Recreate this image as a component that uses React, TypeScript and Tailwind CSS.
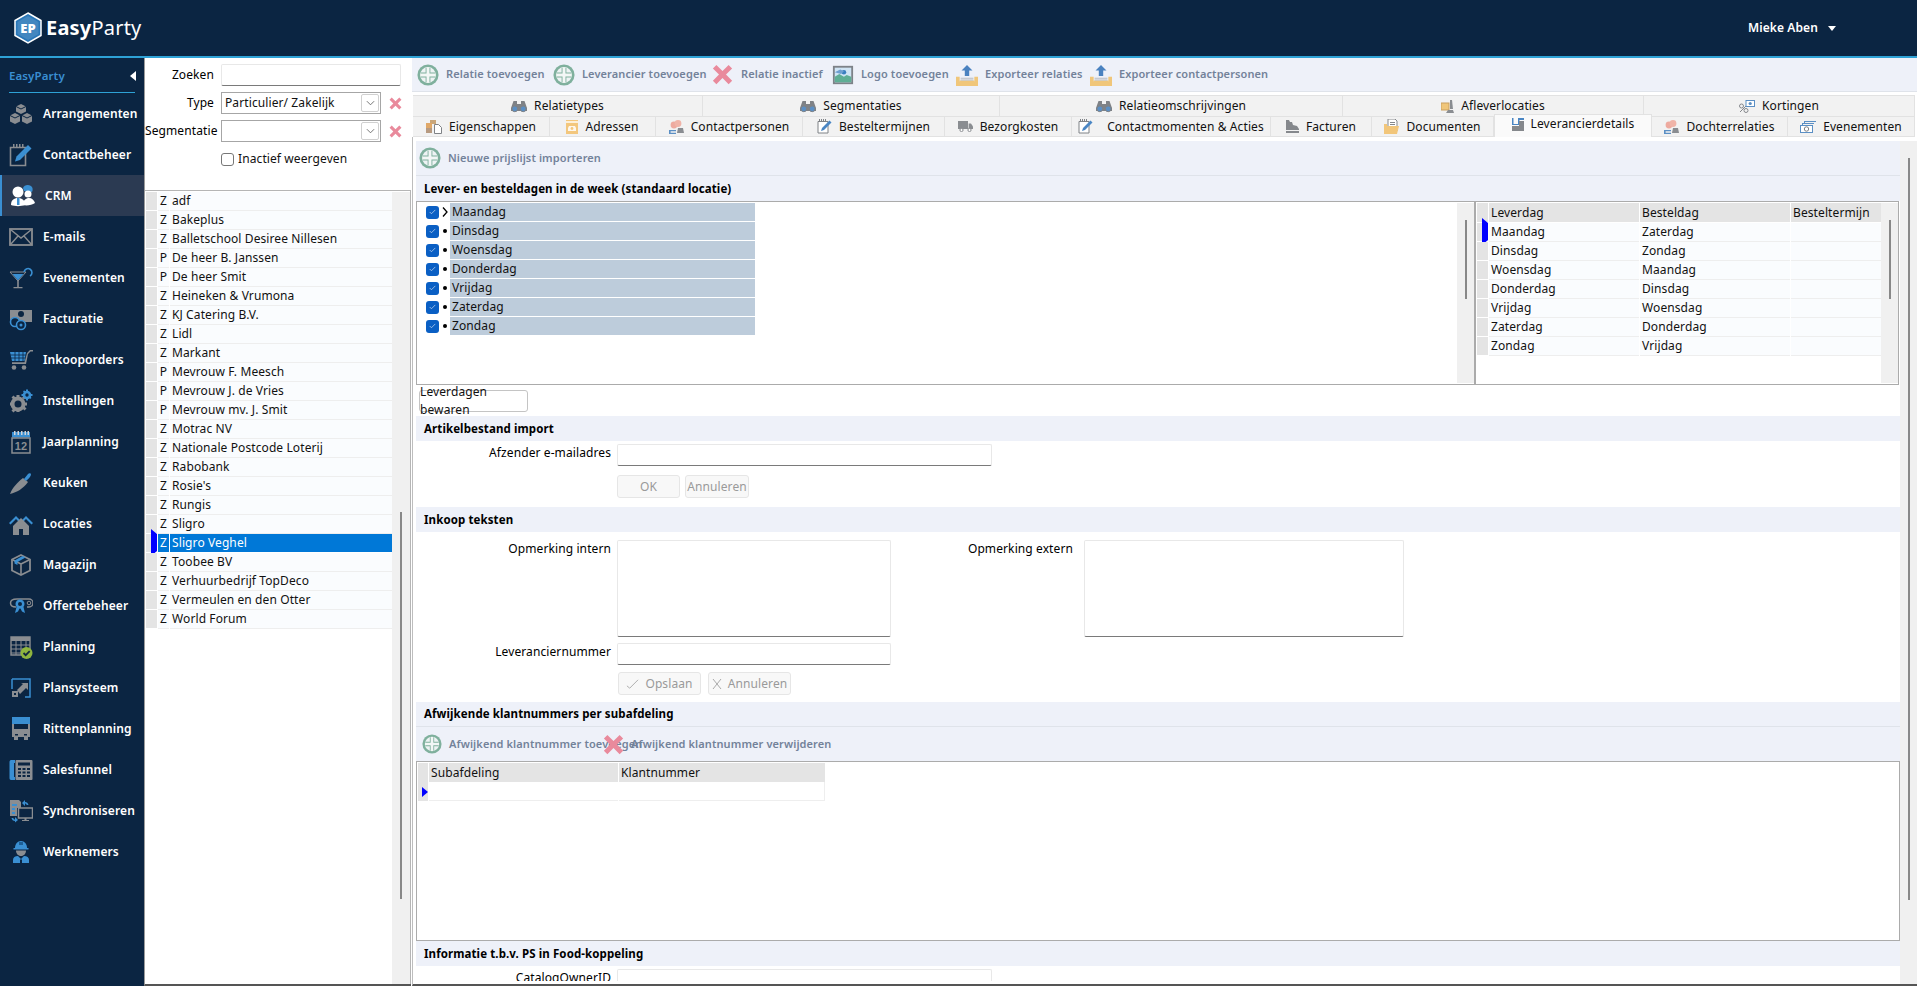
import React from "react";

const G = "#8a8d91";
const B = "#3a8fd2";

type IP = { className?: string };
const Svg = ({ children, className = "w-6 h-6", vb = "0 0 24 24" }: { children: React.ReactNode; className?: string; vb?: string }) => (
  <svg viewBox={vb} className={`${className} shrink-0`}>{children}</svg>
);

const PlusI = ({ className = "w-[22px] h-[22px]" }: IP) => (
  <Svg className={className}>
    <circle cx="12" cy="12" r="11.5" fill="#7fb09d" />
    <circle cx="12" cy="12" r="8.6" fill="#eef3f4" />
    <path d="M9.4 4h5.2v5.4H20v5.2h-5.4V20H9.4v-5.4H4V9.4h5.4z" fill="#7fb09d" />
    <path d="M10.4 3.6h3.2v6.8h6.8v3.2h-6.8v6.8h-3.2v-6.8H3.6v-3.2h6.8z" fill="#f3f7f6" />
  </Svg>
);
const XI = ({ className = "w-[21px] h-[21px]" }: IP) => (
  <Svg className={className}>
    <path d="M5 1l7 7 7-7 4 4-7 7 7 7-4 4-7-7-7 7-4-4 7-7-7-7z" fill="#e98a9c" />
  </Svg>
);
const LogoI = () => (
  <Svg className="w-[22px] h-[22px]">
    <rect x="1" y="2" width="22" height="20" fill="#7d8288" />
    <rect x="3" y="4" width="18" height="16" fill="#cfe4f4" />
    <path d="M3 20v-6l5-3 5 3 3-2 5 2v6z" fill="#5fae95" />
    <circle cx="13" cy="9" r="2.5" fill="#3a7fc0" />
    <path d="M3 9l6-3 4 2-3 3z" fill="#6f9fd0" />
  </Svg>
);
const UpI = () => (
  <Svg className="w-[22px] h-[22px]">
    <path d="M0 14h4v5h16v-5h4v10H0z" fill="#f0c67a" />
    <path d="M4 18h16v6H4z" fill="#f0c67a" />
    <path d="M5 15h14v1H5zM5 17h14v1H5z" fill="#b8bcc2" />
    <path d="M12 1l6 6h-3.6v6H9.6V7H6z" fill="#4a82c0" />
  </Svg>
);
const Binoc = () => (
  <Svg className="w-[16px] h-[13px]" vb="0 0 16 13">
    <path d="M2.5 1h3.5v3h4V1h3.5L16 8v3H0V8z" fill="#7f8286" />
    <circle cx="3.8" cy="8.8" r="2.9" fill="#5b8fc4" stroke="#7f8286" />
    <circle cx="12.2" cy="8.8" r="2.9" fill="#5b8fc4" stroke="#7f8286" />
  </Svg>
);
const TabI = {
  props: () => (
    <Svg className="w-[16px] h-[14px]" vb="0 0 16 14">
      <rect x="4" y="0" width="6" height="4" fill="#c9a67a" />
      <rect x="0" y="3" width="6" height="5" fill="#e0a868" />
      <rect x="0" y="8" width="6" height="5" fill="#b79a80" />
      <path d="M8.5 4.5h4l3 3v6h-7z" fill="#fff" stroke="#7f8286" />
    </Svg>
  ),
  addr: () => (
    <Svg className="w-[12px] h-[14px]" vb="0 0 12 14">
      <rect width="12" height="14" fill="#f3c77d" />
      <rect x="0" y="1" width="12" height="2" fill="#fdf0d8" />
      <path d="M3 6h6l1 2v3H2V8z" fill="#fff" opacity=".85" />
      <circle cx="6" cy="8.5" r="1.4" fill="#f3c77d" />
    </Svg>
  ),
  people: () => (
    <Svg className="w-[15px] h-[14px]" vb="0 0 15 14">
      <circle cx="5" cy="5" r="3.4" fill="#eeaa9f" />
      <circle cx="9" cy="3.5" r="3.4" fill="#f0b4a8" />
      <path d="M9 8h5l1 5H8z" fill="#8a8d91" />
      <path d="M0 10h7v1.2H1.6v1.5H7V14H0z" fill="#5b8fc4" />
    </Svg>
  ),
  note: () => (
    <Svg className="w-[15px] h-[15px]" vb="0 0 15 15">
      <path d="M1 2.5h10V14H1z" fill="#fff" stroke="#7f8286" />
      <path d="M2 0h1v2H2zM4 0h1v2H4zM6 0h1v2H6zM8 0h1v2H8z" fill="#7f8286" />
      <path d="M12.5 1.5l2 2L7 11l-3 1 1-3z" fill="#4a86c4" />
    </Svg>
  ),
  truck: () => (
    <Svg className="w-[15px] h-[11px]" vb="0 0 15 11">
      <rect x="0" y="0" width="10" height="8" fill="#8a8d91" />
      <path d="M10.6 2.5h2.4L15 5.5V8h-4.4z" fill="#8a8d91" />
      <circle cx="3.5" cy="9" r="1.6" fill="#fff" stroke="#8a8d91" />
      <circle cx="11.5" cy="9" r="1.6" fill="#fff" stroke="#8a8d91" />
    </Svg>
  ),
  fact: () => (
    <Svg className="w-[13px] h-[13px]" vb="0 0 13 13">
      <path d="M0 0h3l1 2h2l1 3 4 1 2 3v1H0z" fill="#85888c" />
      <rect x="0" y="11" width="13" height="2" fill="#85888c" />
    </Svg>
  ),
  doc: () => (
    <Svg className="w-[15px] h-[15px]" vb="0 0 15 15">
      <path d="M4 0h7l2 2v10H4z" fill="#fff" stroke="#85888c" />
      <path d="M6 3h5v1H6zM6 5h5v1H6z" fill="#85888c" />
      <path d="M0 5h3v2h12l-2 8H0z" fill="#f2c67a" />
    </Svg>
  ),
  lev: () => (
    <Svg className="w-[12px] h-[13px]" vb="0 0 12 13">
      <path d="M0 0h1.5v6H6V0h6v2H7.5v5H0z" fill="#4a86c4" />
      <path d="M0 13V8h7V3h5v10z" fill="#85888c" />
    </Svg>
  ),
  money: () => (
    <Svg className="w-[16px] h-[12px]" vb="0 0 16 12">
      <path d="M4 0h12v1H5v1H4z" fill="#5b8fc4" />
      <path d="M2 2h12v1H3v1H2z" fill="#5b8fc4" />
      <rect x=".5" y="4.5" width="12" height="7" fill="#fff" stroke="#5b8fc4" />
      <circle cx="6.5" cy="8" r="2.2" fill="none" stroke="#7f8286" />
    </Svg>
  ),
  loc: () => (
    <Svg className="w-[13px] h-[13px]" vb="0 0 13 13">
      <rect x="0" y="3" width="8" height="7" fill="#f0c67a" stroke="#c9a060" />
      <path d="M9 0h2l1 9h-3z" fill="#8a8d91" />
      <path d="M5 13l2-3h5l1 3z" fill="#8a8d91" />
    </Svg>
  ),
  pct: () => (
    <Svg className="w-[16px] h-[13px]" vb="0 0 16 13">
      <path d="M1 12L9 4" stroke="#85888c" strokeWidth="1" />
      <circle cx="2.5" cy="6" r="2" fill="none" stroke="#85888c" />
      <circle cx="7" cy="10.5" r="2" fill="none" stroke="#85888c" />
      <rect x="7" y="0.5" width="8.5" height="6" fill="#fff" stroke="#5b8fc4" />
      <circle cx="11.2" cy="3.5" r="1.6" fill="#5b8fc4" />
    </Svg>
  ),
};

const NavIcons: Record<string, React.ReactNode> = {
  Arrangementen: (
    <Svg>
      <path d="M12 2l5 2.5v5L12 12 7 9.5v-5z" fill={G} />
      <path d="M6 11l5 2.5v6L6 22l-5-2.5v-6z" fill={G} />
      <path d="M18 11l5 2.5v6L18 22l-5-2.5v-6z" fill={G} />
      <path d="M7 4.5l5 2.5 5-2.5M1 13.5L6 16l5-2.5M13 13.5l5 2.5 5-2.5" stroke="#0b2542" fill="none" />
    </Svg>
  ),
  Contactbeheer: (
    <Svg>
      <path d="M1.5 4.5h15v18h-15z" fill="none" stroke={G} strokeWidth="1.6" />
      <path d="M4 1h1.5v4H4zM7 1h1.5v4H7zM10 1h1.5v4H10zM13 1h1.5v4H13z" fill={G} />
      <path d="M19 2l3.5 3.5L11 17l-5 1.5L7.5 13.5z" fill={B} />
    </Svg>
  ),
  CRM: (
    <Svg>
      <circle cx="7" cy="8" r="5.5" fill="#fff" />
      <path d="M0 21c0-5 3-7 7-7s7 2 7 7c-4 1.500-10 1.500-14 0z" fill="#fff" />
      <path d="M6 14h2.500v7H6z" fill={B} />
      <path d="M12 4c1-3 5-4 8-2 2 1.500 2 4 1 6l-8-1z" fill={B} />
      <circle cx="17" cy="10" r="3.500" fill="#fff" />
      <path d="M12 21c0-5 3-7 6-7s5 2 6 5c-3 2-8 3-12 2z" fill="#fff" />
    </Svg>
  ),
  "E-mails": (
    <Svg>
      <rect x="1" y="4" width="22" height="16" fill="none" stroke={G} strokeWidth="1.800" />
      <path d="M1.500 4.500L12 13 22.500 4.500M1.500 19.500l7.500-8.500M22.500 19.500L15 11" stroke={G} strokeWidth="1.400" fill="none" />
    </Svg>
  ),
  Evenementen: (
    <Svg>
      <path d="M1 6h16l-8 9z" fill="none" stroke={G} strokeWidth="1" />
      <path d="M3.500 8h11L9 14.500z" fill={B} />
      <path d="M8.200 14h1.600v7H8.200zM4.500 21h9v1.300h-9z" fill={G} />
      <path d="M15 6a4 4 0 1 1 6 4" stroke={B} strokeWidth="1.600" fill="none" />
    </Svg>
  ),
  Facturatie: (
    <Svg>
      <rect x="1" y="3" width="22" height="12" fill={G} />
      <circle cx="12" cy="7" r="3" fill="#0b2542" />
      <circle cx="6" cy="15" r="4.500" fill="#0b2542" stroke={B} strokeWidth="1.600" />
      <circle cx="12" cy="18" r="4.500" fill="#0b2542" stroke={B} strokeWidth="1.600" />
      <circle cx="12" cy="18" r="1.500" fill={B} />
    </Svg>
  ),
  Inkooporders: (
    <Svg>
      <path d="M1 4h16l-1.500 9H3z" fill={B} />
      <path d="M1 7h16M1 10h16M6 4v9M10 4v9M14 4v9" stroke="#0b2542" strokeWidth=".8" />
      <path d="M18 5l3-3h3v1.500h-2.500L19 6l-2 10H3v-1.800h12.500z" fill={G} />
      <circle cx="5" cy="19.500" r="2.300" fill={G} />
      <circle cx="15" cy="19.500" r="2.300" fill={G} />
    </Svg>
  ),
  Instellingen: (
    <Svg>
      <circle cx="9" cy="15" r="5.500" fill="none" stroke={G} strokeWidth="4" />
      <path d="M7.500 6h3v3h-3zM7.500 21h3v2h-3zM1 13.500h2v3H1zM15 13.500h3v3h-3zM2.500 8.500l2-2 2 2-2 2zM13.500 19.500l2-2 2 2-2 2zM2.500 21.500l2 2 2-2-2-2zM13 8.500l2-2 2 2-2 2z" fill={G} />
      <circle cx="18" cy="6" r="3" fill="none" stroke={B} strokeWidth="2.600" />
      <path d="M17 .5h2v2h-2zM17 9.500h2v2h-2zM12.500 5h2v2h-2zM21.500 5h2v2h-2zM14 2l1.500-.500 1 1.500-1.500 1zM20 8.500l1.500-1 1 1.500-1.500 1z" fill={B} />
    </Svg>
  ),
  Jaarplanning: (
    <Svg>
      <rect x="3" y="2" width="18" height="5.500" fill={B} />
      <path d="M5 1h1.500v4H5zM8.500 1H10v4H8.500zM12 1h1.500v4H12zM15.500 1H17v4h-1.500zM18.500 1H20v4h-1.500z" fill="#cfd3d8" />
      <path d="M3 8h18v15H3z" fill="none" stroke={G} strokeWidth="1.500" />
      <text x="12" y="20" textAnchor="middle" fontSize="11" fontWeight="700" fontFamily="Liberation Sans" fill={G}>12</text>
    </Svg>
  ),
  Keuken: (
    <Svg>
      <path d="M1 23C3 17 9 11 14 7l5 4c-5 7-11 10-18 12z" fill={G} />
      <path d="M15 8l4-5c1-1 3-1 3 .5 0 1.500-2 4-4 5.500l-1 1z" fill={B} />
    </Svg>
  ),
  Locaties: (
    <Svg>
      <path d="M0 11L7 4l5 5 5-5 7 7-1.500 1.500L17 7l-5 5-5-5-5.500 5.500z" fill={B} />
      <path d="M12 6L4 14v9h16v-9z" fill={G} />
      <path d="M10 23v-6h4v6z" fill="#0b2542" />
    </Svg>
  ),
  Magazijn: (
    <Svg>
      <path d="M12 2l9 4.500v11L12 22l-9-4.500v-11z" fill="none" stroke={G} strokeWidth="1.800" />
      <path d="M3 6.500l9 4.500v11M12 11l9-4.500" stroke={G} strokeWidth="1.600" fill="none" />
      <path d="M5.500 7.500l8-4.500 3 1.500-8 4.500v3l-3-1.500z" fill={B} />
    </Svg>
  ),
  Offertebeheer: (
    <Svg>
      <path d="M8 5h12a3.500 3.500 0 0 1 0 8h-2M8 5c-4 0-6.500 1.500-6.500 4S4 13 7 13" fill="none" stroke={G} strokeWidth="1.500" />
      <circle cx="20" cy="9" r="1.800" fill="none" stroke={G} />
      <circle cx="11" cy="10" r="4.500" fill={B} />
      <circle cx="11" cy="10" r="2" fill="#0b2542" />
      <path d="M7.500 13L6 19l3-1.500 2-4zM14.500 13l1.500 6-3-1.500-2-4z" fill={B} />
    </Svg>
  ),
  Planning: (
    <Svg>
      <path d="M2 2h19v18H2z" fill="none" stroke={G} strokeWidth="1.400" />
      <rect x="2" y="2" width="19" height="4" fill={G} />
      <path d="M2 10h19M2 14h19M2 18h19M7 6v14M12 6v14M17 6v14" stroke={G} strokeWidth="1" />
      <circle cx="17.500" cy="18" r="6" fill="#8fb53e" />
      <path d="M14.500 18l2.200 2.200 4-4" stroke="#12263f" strokeWidth="1.800" fill="none" />
    </Svg>
  ),
  Plansysteem: (
    <Svg>
      <path d="M3 3h18v18h-5M3 3v10" stroke={B} strokeWidth="1.500" fill="none" />
      <path d="M3 15h6v6H3zM8 14l6-6-2-1h7v7l-2-2-6 6z" fill={G} />
      <rect x="5" y="17" width="2" height="2" fill="#0b2542" />
    </Svg>
  ),
  Rittenplanning: (
    <Svg>
      <rect x="3" y="0" width="18" height="8" fill={B} />
      <rect x="3" y="4" width="18" height="16" fill={G} />
      <rect x="5" y="7" width="14" height="5" fill="#0b2542" />
      <path d="M6 17h3v1.500H6zM15 17h3v1.500h-3z" fill="#0b2542" />
      <path d="M5 20h4v3H5zM15 20h4v3h-4z" fill={G} />
      <path d="M3 4h18v3H3z" fill={B} />
    </Svg>
  ),
  Salesfunnel: (
    <Svg>
      <path d="M2 2h4v3H5v14h1v3H2c-1 0-1.500-1-1.500-2V4C.5 3 1 2 2 2z" fill={B} />
      <rect x="6.500" y="2" width="17" height="20" rx="1" fill={G} />
      <rect x="9" y="4.500" width="12" height="3" fill="#0b2542" />
      <path d="M9 10h3v2H9zM13.500 10h3v2h-3zM18 10h3v2h-3zM9 13.500h3v2H9zM13.500 13.500h3v2h-3zM18 13.500h3v2h-3zM9 17h3v2H9zM13.500 17h3v2h-3zM18 17h3v2h-3z" fill="#0b2542" />
    </Svg>
  ),
  Synchroniseren: (
    <Svg>
      <path d="M1 1h9l2 2v6H8v8H1z" fill={G} />
      <path d="M3 5h5v2H3zM3 9h3v2H3zM3 13h3v2H3z" fill={B} />
      <rect x="9.500" y="9" width="14" height="10" fill="#0b2542" stroke={G} strokeWidth="1.500" />
      <path d="M15.500 19h2v2h2.500v1h-7v-1h2.500z" fill={G} />
      <path d="M13 4l3-3v2c2 0 3 1 3.500 3h-1.800c-.3-1-1-1.500-1.700-1.500V7z" fill={B} />
      <path d="M9 21l-3 2.500V22c-2 0-3-1-3.500-3h1.800c.3 1 1 1.500 1.700 1.500V18z" fill={B} />
    </Svg>
  ),
  Werknemers: (
    <Svg>
      <path d="M6 8c0-4 2.500-7 6-7s6 3 6 7z" fill={B} />
      <rect x="10" y="2" width="4" height="3" fill="#1e5f96" />
      <path d="M4.500 8h15v1.500h-15z" fill={B} />
      <path d="M7 10.500h10c0 3-2 5.500-5 5.500s-5-2.500-5-5.500z" fill={G} />
      <path d="M4 23v-3c0-2.500 2-4 5-4l3 3 3-3c3 0 5 1.500 5 4v3h-7v-3l-1-1-1 1v3z" fill={B} />
    </Svg>
  ),
};

const navItems = ["Arrangementen","Contactbeheer","CRM","E-mails","Evenementen","Facturatie","Inkooporders","Instellingen","Jaarplanning","Keuken","Locaties","Magazijn","Offertebeheer","Planning","Plansysteem","Rittenplanning","Salesfunnel","Synchroniseren","Werknemers"];

const relaties: [string, string][] = [["Z","adf"],["Z","Bakeplus"],["Z","Balletschool Desiree Nillesen"],["P","De heer B. Janssen"],["P","De heer Smit"],["Z","Heineken & Vrumona"],["Z","KJ Catering B.V."],["Z","Lidl"],["Z","Markant"],["P","Mevrouw F. Meesch"],["P","Mevrouw J. de Vries"],["P","Mevrouw mv. J. Smit"],["Z","Motrac NV"],["Z","Nationale Postcode Loterij"],["Z","Rabobank"],["Z","Rosie's"],["Z","Rungis"],["Z","Sligro"],["Z","Sligro Veghel"],["Z","Toobee BV"],["Z","Verhuurbedrijf TopDeco"],["Z","Vermeulen en den Otter"],["Z","World Forum"]];

const tabs1: { t: string; w: string; i: React.ReactNode }[] = [
  { t: "Relatietypes", w: "w-[290px]", i: <Binoc /> },
  { t: "Segmentaties", w: "w-[297px]", i: <Binoc /> },
  { t: "Relatieomschrijvingen", w: "w-[343px]", i: <Binoc /> },
  { t: "Afleverlocaties", w: "w-[301px]", i: <TabI.loc /> },
  { t: "Kortingen", w: "w-[271px]", i: <TabI.pct /> },
];
const tabs2: { t: string; w: string; i: React.ReactNode; a?: boolean }[] = [
  { t: "Eigenschappen", w: "w-[137px]", i: <TabI.props /> },
  { t: "Adressen", w: "w-[106px]", i: <TabI.addr /> },
  { t: "Contactpersonen", w: "w-[147px]", i: <TabI.people /> },
  { t: "Besteltermijnen", w: "w-[142px]", i: <TabI.note /> },
  { t: "Bezorgkosten", w: "w-[127px]", i: <TabI.truck /> },
  { t: "Contactmomenten & Acties", w: "w-[199px]", i: <TabI.note /> },
  { t: "Facturen", w: "w-[101px]", i: <TabI.fact /> },
  { t: "Documenten", w: "w-[122px]", i: <TabI.doc /> },
  { t: "Leverancierdetails", w: "w-[158px]", i: <TabI.lev />, a: true },
  { t: "Dochterrelaties", w: "w-[136px]", i: <TabI.people /> },
  { t: "Evenementen", w: "w-[127px]", i: <TabI.money /> },
];

const days = ["Maandag","Dinsdag","Woensdag","Donderdag","Vrijdag","Zaterdag","Zondag"];
const order: [string, string][] = [["Maandag","Zaterdag"],["Dinsdag","Zondag"],["Woensdag","Maandag"],["Donderdag","Dinsdag"],["Vrijdag","Woensdag"],["Zaterdag","Donderdag"],["Zondag","Vrijdag"]];

const Arrow = () => <span className="w-0 h-0 border-y-[5.5px] border-y-transparent border-l-[6px] border-l-[#0000ff]" />;

const Head = ({ t, className = "" }: { t: string; className?: string }) => (
  <div className={`h-[25px] shrink-0 bg-[#eef1f9] flex items-center pl-[8px] font-bold text-[11.5px] text-black ${className}`}>{t}</div>
);
const Track = ({ className = "" }: { className?: string }) => (
  <div className={`w-[17px] shrink-0 bg-[#f0f0f0] flex justify-center ${className}`}>
    <div className="w-[2px] h-[79px] mt-[17px] bg-[#888]" />
  </div>
);
const Inp = ({ className = "" }: { className?: string }) => (
  <input readOnly className={`block h-[22px] bg-white border border-[#e8e8e8] border-b-[#7a7a7a] rounded-[2px] outline-none ${className}`} />
);
const Lab = ({ t, w }: { t: string; w: string }) => <div className={`${w} shrink-0 text-right text-black leading-[18px]`}>{t}</div>;
const Dis = ({ children, className = "" }: { children: React.ReactNode; className?: string }) => (
  <div className={`h-[23px] flex items-center justify-center gap-[6px] bg-[#f8f8f8] border border-[#e6e6e6] rounded-[3px] text-[#9a9a9a] ${className}`}>{children}</div>
);
const Sel = ({ t }: { t: string }) => (
  <div className="w-[160px] h-[22px] border border-[#a6a6a6] flex items-center justify-between bg-white">
    <span className="pl-[3px] text-[#111]">{t}</span>
    <span className="w-[18px] h-[18px] mr-[1px] border border-[#d0d0d0] rounded-[2px] flex items-center justify-center">
      <svg viewBox="0 0 10 6" className="w-[9px] h-[6px]"><path d="M1 1l4 4 4-4" stroke="#666" fill="none" /></svg>
    </span>
  </div>
);
const TB = ({ w, icon, t, gap = "gap-[7px]" }: { w: string; icon: React.ReactNode; t: string; gap?: string }) => (
  <div className={`${w} shrink-0 flex items-center ${gap} whitespace-nowrap`}>
    {icon}
    <span className="text-[#73829a] font-semibold text-[11px]">{t}</span>
  </div>
);

export default function App() {
  return (
    <div className="w-[1917px] h-[986px] overflow-hidden flex flex-col bg-white text-[12px] text-[#111] tracking-[0.1px] font-['Noto_Sans','Open_Sans',sans-serif]">
      <header className="h-[58px] shrink-0 bg-[#0b2542] border-b-2 border-[#2ea2d6] flex items-center justify-between pl-[14px]">
        <div className="flex items-center gap-[4px] text-white">
          <svg viewBox="0 0 28 32" className="w-[28px] h-[32px]">
            <path d="M14 1l13 7.500v15L14 31 1 23.500v-15z" fill="#2a77b8" stroke="#fff" strokeWidth="1.500" />
            <path d="M14 4l10.500 6v12L14 28 3.500 22V10z" fill="#ffffff" fillOpacity=".12" />
            <text x="14" y="21" textAnchor="middle" fontSize="13" fontWeight="800" fontFamily="Open Sans" fill="#fff">EP</text>
          </svg>
          <span className="text-[20px] leading-none tracking-[0.2px]"><b>Easy</b>Party</span>
        </div>
        <div className="flex items-center gap-[10px] text-white font-semibold mr-[81px]">
          <span>Mieke Aben</span>
          <span className="w-0 h-0 border-x-[4.5px] border-x-transparent border-t-[5px] border-t-white mt-[1px]" />
        </div>
      </header>
      <div className="flex-1 min-h-0 flex">
        <aside className="w-[144px] shrink-0 bg-[#0b2542] flex flex-col">
          <div className="h-[35px] mx-[9px] shrink-0 border-b border-[#2ea2d6] flex items-center justify-between text-[#3a8fd2] font-semibold pr-[0px] pt-[1px]">
            <span className="text-[11.5px]">EasyParty</span>
            <span className="w-0 h-0 border-y-[5px] border-y-transparent border-r-[6px] border-r-white mr-[-1px]" />
          </div>
          <nav className="flex flex-col">
            {navItems.map((n) => (
              <div key={n} className={`h-[41px] flex items-center gap-[10px] pl-[9px] font-semibold text-white text-[12px] ${n === "CRM" ? "bg-[#2b3a52] border-l-2 border-[#3a8fd2] pl-[7px]" : ""}`}>
                {NavIcons[n]}
                <span>{n}</span>
              </div>
            ))}
          </nav>
        </aside>

        <section className="w-[267px] shrink-0 flex flex-col border-l border-[#9a9a9a] border-b-2 border-b-[#555]">
          <div className="h-[132px] shrink-0 pt-[6px] flex flex-col gap-[6px]">
            <div className="flex items-center gap-[7px]"><Lab t="Zoeken" w="w-[69px]" /><Inp className="w-[180px]" /></div>
            <div className="flex items-center gap-[7px]"><Lab t="Type" w="w-[69px]" /><Sel t="Particulier/ Zakelijk" /><XI className="w-[13px] h-[13px] ml-[1px]" /></div>
            <div className="flex items-center gap-[7px]"><Lab t="Segmentatie" w="w-[69px]" /><Sel t="" /><XI className="w-[13px] h-[13px] ml-[1px]" /></div>
            <div className="flex items-center gap-[4px] pl-[76px] mt-[2px]">
              <span className="w-[13px] h-[13px] rounded-[3px] border border-[#777] bg-white" />
              <span>Inactief weergeven</span>
            </div>
          </div>
          <div className="flex-1 min-h-0 flex border-t border-r border-[#b5b5b5] pt-[1px]">
            <div className="w-[247px] shrink-0 pl-[1px]">
              {relaties.map(([k, n], i) => {
                const sel = n === "Sligro Veghel";
                return (
                  <div key={n + i} className="h-[19px] flex">
                    <div className="w-[11px] shrink-0 mb-[1px] bg-[#e4e4e4] flex items-center justify-end"><span className={sel ? "block" : "hidden"}><Arrow /></span></div>
                    <div className={`w-[11px] ml-[1px] shrink-0 text-center leading-[18px] ${sel ? "bg-[#0078d7] text-white h-[18px]" : "bg-[#fafcfe] border-b border-[#eee]"}`}>{k}</div>
                    <div className={`flex-1 ml-[1px] pl-[2px] leading-[18px] ${sel ? "bg-[#0078d7] text-white h-[18px]" : "bg-[#fafcfe] border-b border-[#eee]"}`}>{n}</div>
                  </div>
                );
              })}
            </div>
            <div className="flex-1 bg-[#f0f0f0] flex justify-center">
              <div className="w-[2px] h-[387px] mt-[320px] bg-[#888]" />
            </div>
          </div>
        </section>

        <main className="flex-1 min-w-0 flex flex-col pl-[1px]">
          <div className="h-[34px] shrink-0 bg-[#eef1f9] border-b border-[#dfe3ea] flex items-center pl-[5px]">
            <TB w="w-[136px]" icon={<PlusI />} t="Relatie toevoegen" />
            <TB w="w-[159px]" icon={<PlusI />} t="Leverancier toevoegen" />
            <TB w="w-[120px]" icon={<XI />} t="Relatie inactief" gap="gap-[8px]" />
            <TB w="w-[124px]" icon={<LogoI />} t="Logo toevoegen" />
            <TB w="w-[134px]" icon={<UpI />} t="Exporteer relaties" />
            <TB w="w-[160px]" icon={<UpI />} t="Exporteer contactpersonen" />
          </div>
          <div className="pl-[1px] pt-[3px] shrink-0">
            <div className="flex h-[21px]">
              {tabs1.map((t) => (
                <div key={t.t} className={`${t.w} shrink-0 bg-[#f2f2f2] border-r border-t border-[#e2e2e2] flex items-center justify-center gap-[7px]`}>
                  {t.i}<span>{t.t}</span>
                </div>
              ))}
            </div>
            <div className="flex h-[21px]">
              {tabs2.map((t) => (
                <div key={t.t} className={`${t.w} shrink-0 flex items-center justify-center ${t.t.startsWith("Contactm") ? "gap-[14px]" : "gap-[7px]"} ${t.a ? "bg-[#fafafa] border border-b-0 border-[#e2e2e2] h-[23px] -mt-[2px] pb-[4px] relative" : "bg-[#f2f2f2] border-r border-t border-b border-[#e2e2e2]"}`}>
                  {t.i}<span>{t.t}</span>
                </div>
              ))}
            </div>
          </div>
          <div className="flex-1 min-h-0 flex border-l border-[#bdbdbd] border-b-2 border-b-[#555] pl-[3px] mt-[0px] pt-[4px]">
            <div className="flex-1 min-w-0 flex flex-col overflow-hidden mb-[3px]">
              <div className="h-[35px] shrink-0 bg-[#eef1f9] border-b border-[#dfe3ea] flex items-center pl-[3px] gap-[7px]">
                <PlusI />
                <span className="text-[#73829a] font-semibold text-[11px]">Nieuwe prijslijst importeren</span>
              </div>
              <Head t="Lever- en besteldagen in de week (standaard locatie)" />
              <div className="h-[184px] shrink-0 flex">
                <div className="w-[1059px] shrink-0 border border-[#ababab] flex py-[1px] pl-[1px]">
                  <div className="flex-1">
                    {days.map((d, i) => (
                      <div key={d} className="h-[19px] flex">
                        <div className="w-[31px] shrink-0 flex items-center pl-[8px] gap-[2px] h-[18px]">
                          <span className="w-[13px] h-[13px] rounded-[3px] bg-[#0a5fc4] flex items-center justify-center">
                            <svg viewBox="0 0 10 8" className="w-[7px] h-[6px]"><path d="M1 4l2.500 2.500L9 1" stroke="#cfe0f5" fill="none" /></svg>
                          </span>
                          <span className="w-[7px] h-[13px] bg-white flex items-center justify-center">
                            {i === 0 ? (
                              <svg viewBox="0 0 6 10" className="w-[6px] h-[10px]"><path d="M1 .5L5 5 1 9.500" stroke="#000" fill="none" strokeWidth="1.300" /></svg>
                            ) : (
                              <span className="w-[4px] h-[4px] rounded-full bg-black" />
                            )}
                          </span>
                        </div>
                        <div className="w-[305px] ml-[1px] h-[18px] bg-[#bdccdb] pl-[2px] leading-[18px] text-[#111]">{d}</div>
                      </div>
                    ))}
                  </div>
                  <Track />
                </div>
                <div className="w-[425px] shrink-0 border border-[#ababab] border-l-2 -ml-[1px] flex py-[1px] pl-[1px]">
                  <div className="flex-1 min-w-0">
                    <div className="flex h-[19px] gap-[1px] mb-[1px]">
                      <div className="w-[11px] bg-[#e4e4e4]" />
                      <div className="w-[150px] bg-[#e4e4e4] pl-[2px] leading-[19px]">Leverdag</div>
                      <div className="w-[150px] bg-[#e4e4e4] pl-[2px] leading-[19px]">Besteldag</div>
                      <div className="flex-1 bg-[#e4e4e4] pl-[2px] leading-[19px]">Besteltermijn</div>
                    </div>
                    {order.map(([a, b], i) => (
                      <div key={a} className="flex h-[19px] gap-[1px]">
                        <div className="w-[11px] h-[18px] bg-[#e4e4e4] flex items-center justify-end"><span className={i === 0 ? "block" : "hidden"}><Arrow /></span></div>
                        <div className="w-[150px] bg-[#fafcfe] border-b border-[#eee] pl-[2px] leading-[18px]">{a}</div>
                        <div className="w-[150px] bg-[#fafcfe] border-b border-[#eee] pl-[2px] leading-[18px]">{b}</div>
                        <div className="flex-1 bg-[#fafcfe] border-b border-[#eee]" />
                      </div>
                    ))}
                  </div>
                  <Track />
                </div>
              </div>
              <div className="h-[31px] shrink-0 pl-[3px] pt-[5px]">
                <div className="w-[109px] h-[22px] border border-[#c4c4c4] rounded-[3px] flex items-center justify-center bg-white">Leverdagen bewaren</div>
              </div>
              <Head t="Artikelbestand import" />
              <div className="flex gap-[6px] mt-[3px]"><Lab t="Afzender e-mailadres" w="w-[195px]" /><Inp className="w-[375px]" /></div>
              <div className="flex gap-[5px] mt-[9px] ml-[201px]"><Dis className="w-[63px]">OK</Dis><Dis className="w-[64px]">Annuleren</Dis></div>
              <Head t="Inkoop teksten" className="mt-[9px]" />
              <div className="flex mt-[8px] h-[97px] shrink-0">
                <Lab t="Opmerking intern" w="w-[195px]" />
                <textarea readOnly className="block w-[274px] h-[97px] ml-[6px] resize-none bg-white border border-[#e8e8e8] border-b-[#7a7a7a] rounded-[2px] outline-none" />
                <Lab t="Opmerking extern" w="w-[182px]" />
                <textarea readOnly className="block w-[320px] h-[97px] ml-[11px] resize-none bg-white border border-[#e8e8e8] border-b-[#7a7a7a] rounded-[2px] outline-none" />
              </div>
              <div className="flex gap-[6px] mt-[6px]"><Lab t="Leveranciernummer" w="w-[195px]" /><Inp className="w-[274px]" /></div>
              <div className="flex gap-[7px] mt-[7px] ml-[202px]">
                <Dis className="w-[83px]">
                  <svg viewBox="0 0 14 10" className="w-[13px] h-[10px]"><path d="M1 7l3 2.500 9-9" stroke="#aaa" fill="none" strokeWidth="1" /></svg>
                  Opslaan
                </Dis>
                <Dis className="w-[83px]">
                  <svg viewBox="0 0 10 12" className="w-[10px] h-[12px]"><path d="M1 1l8 10M9 1L1 11" stroke="#aaa" fill="none" strokeWidth="1" /></svg>
                  Annuleren
                </Dis>
              </div>
              <Head t="Afwijkende klantnummers per subafdeling" className="mt-[7px] border-b border-[#dfe3ea]" />
              <div className="h-[34px] shrink-0 bg-[#eef1f9] flex items-center pl-[6px]">
                <TB w="w-[181px]" icon={<PlusI className="w-[20px] h-[20px]" />} t="Afwijkend klantnummer toevoegen" />
                <TB w="w-[220px]" icon={<XI />} t="Afwijkend klantnummer verwijderen" gap="gap-[7px]" />
              </div>
              <div className="h-[180px] shrink-0 border border-[#ababab] p-[1px]">
                <div className="flex h-[19px] gap-[1px] w-[407px]">
                  <div className="w-[10px] bg-[#e4e4e4]" />
                  <div className="w-[189px] bg-[#e4e4e4] pl-[2px] leading-[19px]">Subafdeling</div>
                  <div className="flex-1 bg-[#e4e4e4] pl-[2px] leading-[19px]">Klantnummer</div>
                </div>
                <div className="flex h-[19px] gap-[1px] w-[407px]">
                  <div className="w-[10px] h-[19px] bg-[#e4e4e4] flex items-center justify-end"><Arrow /></div>
                  <div className="w-[189px] bg-white border-b border-[#eee]" />
                  <div className="flex-1 bg-white border-b border-r border-[#eee]" />
                </div>
              </div>
              <Head t="Informatie t.b.v. PS in Food-koppeling" />
              <div className="flex gap-[6px] mt-[3px]"><Lab t="CatalogOwnerID" w="w-[195px]" /><Inp className="w-[375px]" /></div>
            </div>
            <div className="w-[17px] shrink-0 bg-[#f0f0f0] flex justify-center">
              <div className="w-[2px] h-[742px] mt-[17px] bg-[#888]" />
            </div>
          </div>
        </main>
      </div>
    </div>
  );
}
